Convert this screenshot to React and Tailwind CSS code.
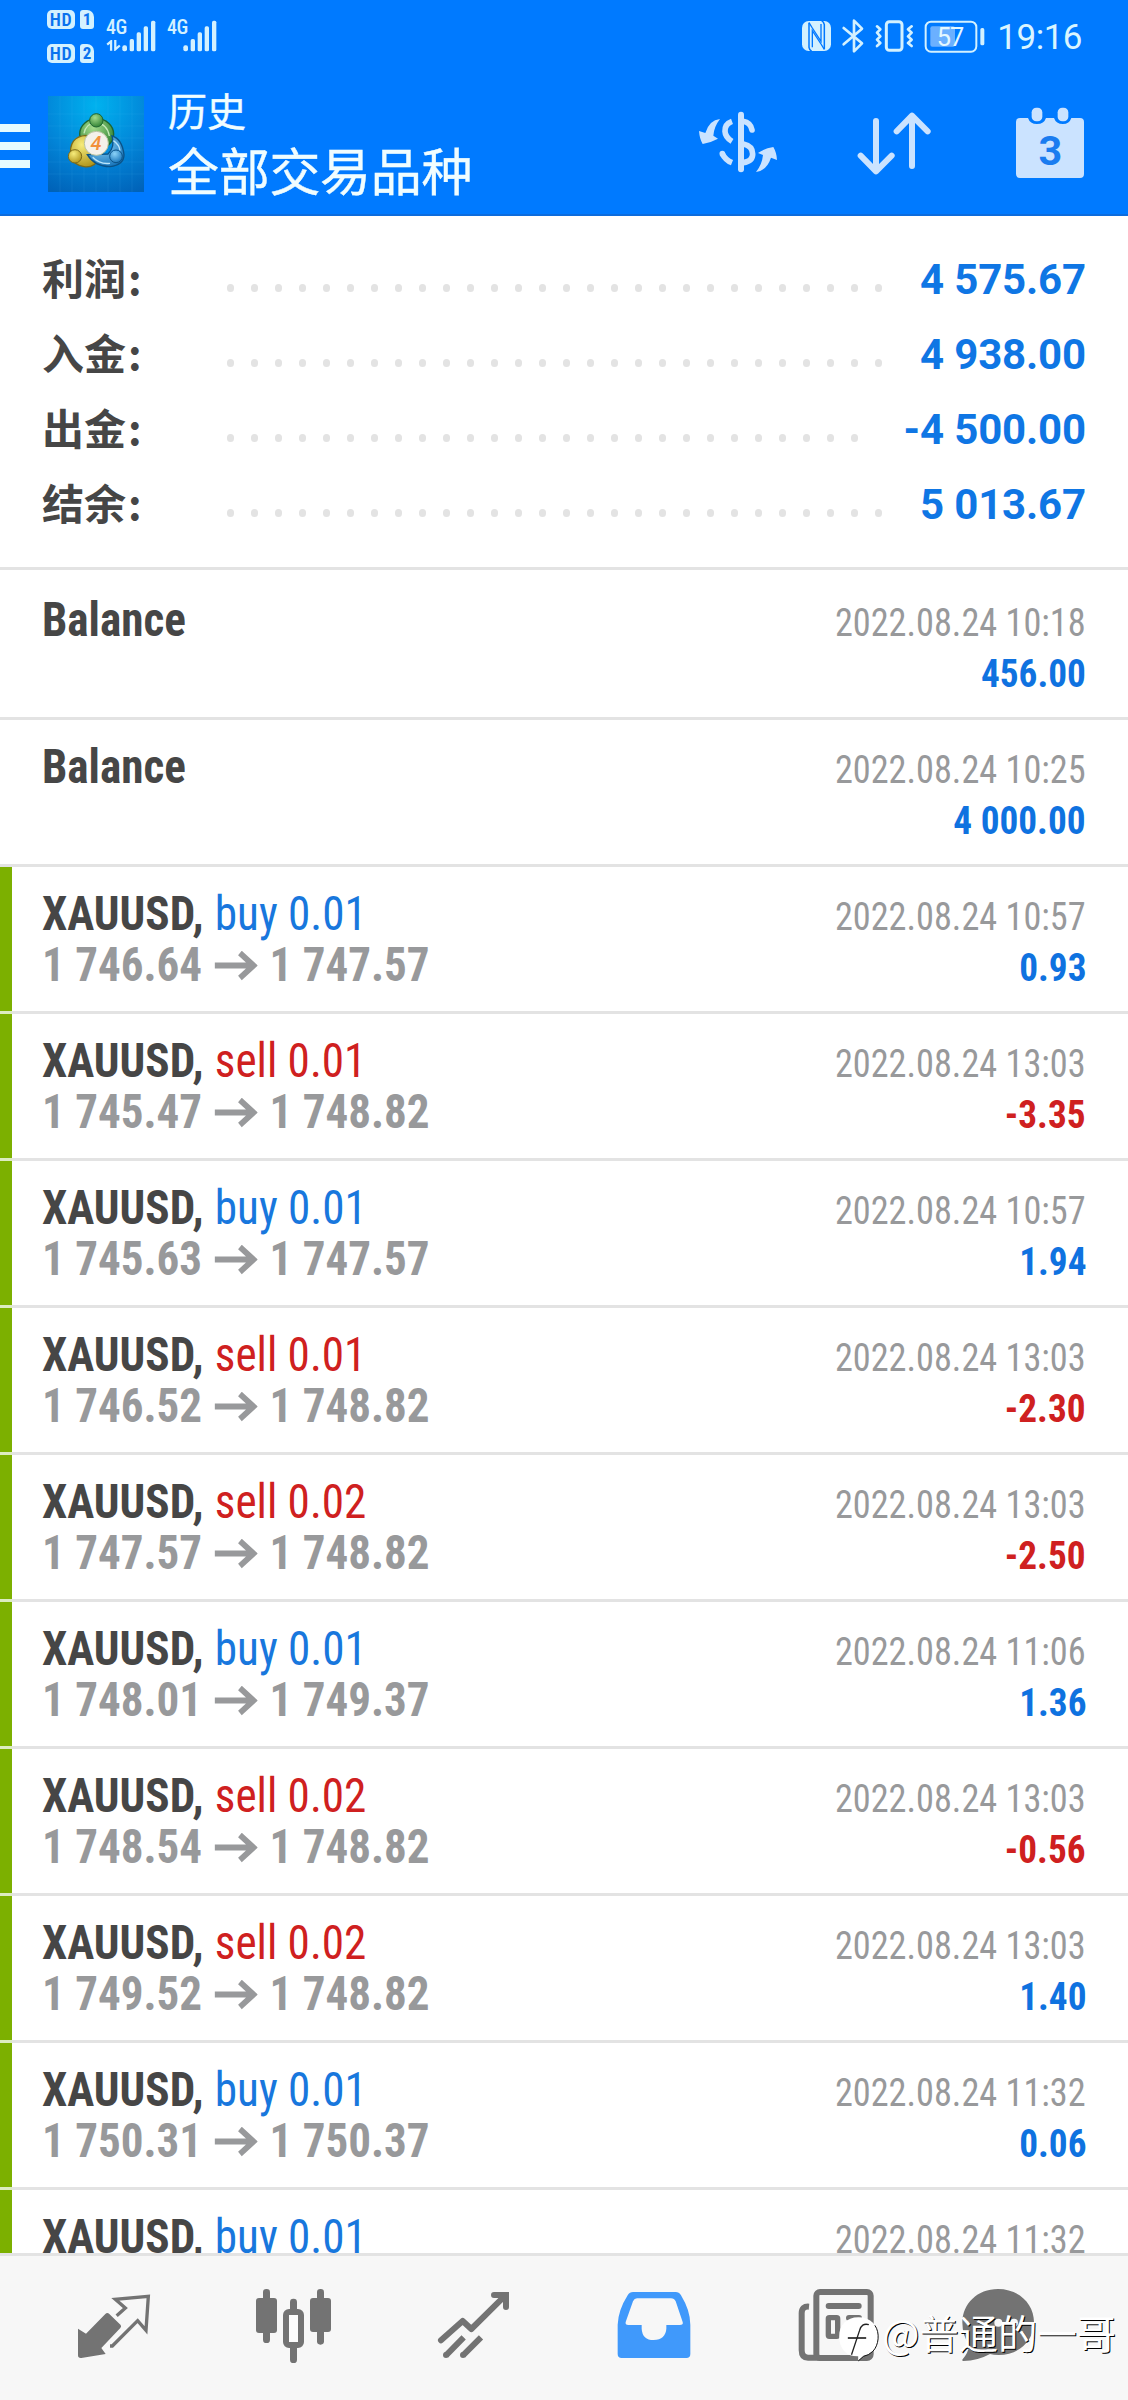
const summary = [
  { label: "利润", value: "4 575.67", dots: 28 },
  { label: "入金", value: "4 938.00", dots: 28 },
  { label: "出金", value: "-4 500.00", dots: 27 },
  { label: "结余", value: "5 013.67", dots: 28 },
];

const deals = [
  { date: "2022.08.24 10:18", profit: "456.00" },
  { date: "2022.08.24 10:25", profit: "4 000.00" },
  { side: "buy", volume: "0.01", from: "1 746.64", to: "1 747.57", date: "2022.08.24 10:57", profit: "0.93" },
  { side: "sell", volume: "0.01", from: "1 745.47", to: "1 748.82", date: "2022.08.24 13:03", profit: "-3.35" },
  { side: "buy", volume: "0.01", from: "1 745.63", to: "1 747.57", date: "2022.08.24 10:57", profit: "1.94" },
  { side: "sell", volume: "0.01", from: "1 746.52", to: "1 748.82", date: "2022.08.24 13:03", profit: "-2.30" },
  { side: "sell", volume: "0.02", from: "1 747.57", to: "1 748.82", date: "2022.08.24 13:03", profit: "-2.50" },
  { side: "buy", volume: "0.01", from: "1 748.01", to: "1 749.37", date: "2022.08.24 11:06", profit: "1.36" },
  { side: "sell", volume: "0.02", from: "1 748.54", to: "1 748.82", date: "2022.08.24 13:03", profit: "-0.56" },
  { side: "sell", volume: "0.02", from: "1 749.52", to: "1 748.82", date: "2022.08.24 13:03", profit: "1.40" },
  { side: "buy", volume: "0.01", from: "1 750.31", to: "1 750.37", date: "2022.08.24 11:32", profit: "0.06" },
  { side: "buy", volume: "0.01", date: "2022.08.24 11:32" },
];

function HdBadge({ n }) {
  return (
    <div className="flex h-[19px] gap-[5px] text-[#0a72ee]">
      <span className="flex w-7 items-center justify-center rounded-[5px] bg-[#d3f1ff] font-['Roboto'] text-[18px] leading-[19px] font-semibold font-stretch-condensed tracking-[0.5px]">HD</span>
      <span className="flex w-[14px] items-center justify-center rounded-[3px] rounded-tr-[7px] bg-[#d3f1ff] font-['Roboto'] text-[17px] leading-[19px] font-bold font-stretch-condensed">{n}</span>
    </div>
  );
}

function Bars() {
  return (
    <svg viewBox="369 60 102 96" className="h-8 w-[34px]" fill="#d3f1ff">
      <rect x="370" y="136" width="14" height="18" rx="6" />
      <rect x="392" y="117" width="13" height="37" rx="5" />
      <rect x="413" y="97" width="13" height="57" rx="5" />
      <rect x="434" y="79" width="13" height="75" rx="5" />
      <rect x="456" y="62" width="13" height="92" rx="5" />
    </svg>
  );
}

function Signal({ data }) {
  return (
    <div className="flex h-8 w-[50px]">
      <div className="flex w-4 flex-col">
        <span className="font-['Roboto'] text-[20px] leading-[15px] font-medium font-stretch-condensed tracking-[-0.5px] text-[#d3f1ff]">4G</span>
        {data && (
          <svg viewBox="320 121 45 34" className="mt-[5px] h-[11px] w-[15px]" fill="none" stroke="#d3f1ff" strokeWidth="7">
            <path d="M323 135 L335 125 V154 M348 121 V150 L362 138" />
          </svg>
        )}
      </div>
      <Bars />
    </div>
  );
}

function StatusBar() {
  return (
    <div className="flex h-[72px] items-start justify-between">
      <div className="flex pt-[10px] pl-[47px]">
        <div className="flex flex-col gap-[15px]">
          <HdBadge n="1" />
          <HdBadge n="2" />
        </div>
        <div className="flex gap-[11px] pt-[10px] pl-[12px]">
          <Signal data />
          <Signal />
        </div>
      </div>
      <div className="flex pt-[18px] pr-[46px]">
        <svg viewBox="420 54 555 108" className="h-9 w-[185px]">
          <rect x="426" y="63" width="87" height="90" rx="20" fill="#d3f1ff" />
          <path d="M447 68 V142 Q448 150 455 154 M493 148 V74 Q492 66 485 62" stroke="#0078ff" strokeWidth="4.5" fill="none" />
          <path d="M457 142 V92 L483 132 M457 84 L483 124 V72" stroke="#0078ff" strokeWidth="4" fill="none" />
          <path d="M447 68 L457 84 M483 132 L493 148" stroke="#0078ff" strokeWidth="4" fill="none" />
          <path d="M551 84 L606 130 L582 154 V62 L606 86 L551 133" stroke="#d3f1ff" strokeWidth="8" fill="none" strokeLinejoin="round" strokeLinecap="round" />
          <rect x="679" y="65" width="47" height="86" rx="9" stroke="#d3f1ff" strokeWidth="9" fill="none" />
          <path d="M651 79 L661 88 L651 98 L661 109 L651 119 L661 129 L651 138 M755 79 L744 88 L755 98 L744 109 L755 119 L744 129 L755 138" stroke="#d3f1ff" strokeWidth="8" fill="none" strokeLinejoin="round" strokeLinecap="round" />
          <rect x="797" y="65" width="152" height="90" rx="16" stroke="#d3f1ff" strokeWidth="6" fill="none" />
          <rect x="811" y="79" width="74" height="61" rx="6" fill="#6bb0ff" />
          <rect x="961" y="84" width="12" height="52" rx="5" fill="#d3f1ff" />
          <text x="870" y="138" textAnchor="middle" fontFamily="Roboto" fontSize="76" letterSpacing="-3" fill="#e4f8ff">57</text>
        </svg>
        <span className="ml-[12px] font-['Roboto'] text-[35px] leading-[40px] tracking-[-0.5px] text-[#d9f5ff]">19:16</span>
      </div>
    </div>
  );
}

function Logo() {
  return (
    <svg viewBox="144 288 288 288" className="h-24 w-24">
      <defs>
        <radialGradient id="sky" cx="0.5" cy="0.1" r="1"><stop offset="0" stopColor="#00b2ef" /><stop offset="0.55" stopColor="#0285d8" /><stop offset="1" stopColor="#0062b8" /></radialGradient>
        <radialGradient id="green" cx="0.4" cy="0.3" r="0.8"><stop offset="0" stopColor="#a4dc8c" /><stop offset="1" stopColor="#23782a" /></radialGradient>
        <radialGradient id="gold" cx="0.4" cy="0.3" r="0.8"><stop offset="0" stopColor="#f6ec7c" /><stop offset="1" stopColor="#a98d12" /></radialGradient>
        <radialGradient id="blue" cx="0.4" cy="0.3" r="0.8"><stop offset="0" stopColor="#8bd2f8" /><stop offset="1" stopColor="#0d6cb4" /></radialGradient>
      </defs>
      <rect x="144" y="288" width="288" height="288" fill="url(#sky)" />
      <path d="M180 288 V576 M216 288 V576 M252 288 V576 M288 288 V576 M324 288 V576 M360 288 V576 M396 288 V576 M144 342 H432 M144 378 H432 M144 414 H432 M144 450 H432 M144 486 H432 M144 522 H432" stroke="#5fc6f2" strokeOpacity="0.16" strokeWidth="2" />
      <ellipse cx="290" cy="402" rx="51" ry="46" fill="url(#green)" stroke="#1d6530" strokeWidth="4" />
      <path d="M252 400 Q258 370 288 368 Q322 372 328 408" fill="none" stroke="#c5e8b8" strokeWidth="4" />
      <path d="M212 468 Q206 410 258 406 L296 478 Q284 504 252 500 Q222 496 212 468 Z" fill="url(#gold)" stroke="#7c6a18" strokeWidth="4" />
      <path d="M262 464 Q284 500 330 500 Q372 494 372 464 Q366 416 336 408 Q346 440 324 462 Z" fill="url(#blue)" stroke="#0b5388" strokeWidth="4" />
      <path d="M278 472 Q300 494 330 490 M340 422 Q358 434 360 452" fill="none" stroke="#b9e5fb" strokeWidth="4" />
      <circle cx="289" cy="361" r="20" fill="url(#green)" stroke="#1d6530" strokeWidth="3" />
      <circle cx="225" cy="469" r="20" fill="url(#gold)" stroke="#7c6a18" strokeWidth="3" />
      <circle cx="348" cy="469" r="19" fill="url(#blue)" stroke="#0b5388" strokeWidth="3" />
      <circle cx="289" cy="430" r="36" fill="#f4f1ea" stroke="#b9c3a0" strokeWidth="3" />
      <text x="288" y="451" textAnchor="middle" fontFamily="Roboto" fontStyle="italic" fontWeight="500" fontSize="60" fill="#f2903c">4</text>
    </svg>
  );
}

function Toolbar() {
  return (
    <div className="flex h-[144px] items-start border-b-2 border-[#0d6cdc]">
      <div className="mt-[52px] flex w-[30px] flex-col gap-[10px]">
        <span className="h-2 bg-[#e6fbff]" />
        <span className="h-2 bg-[#e6fbff]" />
        <span className="h-2 bg-[#e6fbff]" />
      </div>
      <div className="mt-6 ml-[18px]"><Logo /></div>
      <div className="mt-[10px] ml-[24px] flex flex-1 flex-col font-['Noto_Sans_CJK_SC'] text-[#f0fdff] [-webkit-text-stroke:0.4px_#f0fdff]">
        <span className="text-[39px] leading-[54px]">历史</span>
        <span className="text-[51px] leading-[67px] tracking-[-0.3px]">全部交易品种</span>
      </div>
      <div className="mt-[34px] mr-[41px] flex h-[74px] text-[#cbe3ff]">
        <svg viewBox="108 318 252 222" className="h-[74px] w-[84px]" fill="none" stroke="currentColor">
          <path d="M243 344 V508" strokeWidth="18" strokeLinecap="round" />
          <path d="M216 364 Q194 372 195 394 Q196 412 216 424" strokeWidth="17" />
          <path d="M249 364 Q272 368 276 390" strokeWidth="17" strokeLinecap="round" />
          <path d="M187 461 Q196 480 216 488" strokeWidth="17" />
          <circle cx="187" cy="461" r="8.5" fill="currentColor" stroke="none" />
          <path d="M250 432 Q278 438 278 462 Q278 484 250 488" strokeWidth="17" />
          <path d="M180 357 Q148 360 136 399 L117 393 Q119 418 128 432 Q152 428 174 416 L160 407 Q162 380 180 357 Z" fill="currentColor" stroke="none" />
          <path d="M288 516 Q320 512 333 473 L351 480 Q350 458 340 441 Q316 444 294 459 L309 465 Q306 494 288 516 Z" fill="currentColor" stroke="none" />
        </svg>
        <svg viewBox="585 318 234 222" className="ml-[75px] h-[74px] w-[78px]" fill="none" stroke="currentColor" strokeWidth="18" strokeLinecap="round" strokeLinejoin="round">
          <path d="M648 363 V514 M602 467 L648 514 L695 467" />
          <path d="M756 498 V347 M710 394 L756 347 L803 394" />
        </svg>
        <svg viewBox="1059 318 222 222" className="ml-[80px] h-[74px] w-[74px]" fill="currentColor">
          <path d="M1080 354 H1104 Q1110 372 1131 372 Q1152 372 1158 354 H1182 Q1188 372 1209 372 Q1228 372 1234 354 H1260 Q1272 354 1272 366 V522 Q1272 534 1260 534 H1080 Q1068 534 1068 522 V366 Q1068 354 1080 354 Z" />
          <rect x="1115" y="323" width="32" height="41" rx="14" />
          <rect x="1193" y="323" width="32" height="41" rx="14" />
          <text x="1171" y="495" textAnchor="middle" fontFamily="Roboto" fontWeight="700" fontSize="124" fill="#1a7cf0">3</text>
        </svg>
      </div>
    </div>
  );
}

function Summary() {
  return (
    <section className="flex h-[354px] flex-col border-b-[3px] border-[#e3e3e3] pt-[26px]">
      {summary.map((s) => (
        <div key={s.label} className="flex h-[75px] items-center justify-between pr-[42px] pl-[42px]">
          <div className="flex items-center">
            <span className="mb-[5px] w-[185px] font-['Noto_Sans_CJK_SC'] text-[42px] leading-[70px] font-bold text-[#464646]">
              {s.label}<span className="ml-[2px]">:</span>
            </span>
            <div className="mt-4 flex gap-[17px]">
              {Array.from({ length: s.dots }, (_, i) => (
                <span key={i} className="h-2 w-[7px] rounded-full bg-[#e3e3e3]" />
              ))}
            </div>
          </div>
          <span className="font-['Roboto'] text-[42px] leading-[75px] font-bold tracking-[-0.15px] text-[#0f76e4]">{s.value}</span>
        </div>
      ))}
    </section>
  );
}

function DealRow({ side, volume, from, to, date, profit }) {
  const tone = side === "sell" ? "text-[#cf2020]" : "text-[#1877dd]";
  const profitTone = profit?.startsWith("-") ? "text-[#cf2020]" : "text-[#0f72e0]";
  return (
    <div className="flex h-[147px] shrink-0 font-['Roboto'] font-stretch-condensed">
      <div className={side ? "w-3 border-b-[3px] border-[#dcecc0] bg-[#7cb000] bg-clip-padding" : "w-3 border-b-[3px] border-[#e3e3e3]"} />
      <div className="flex flex-1 flex-col border-b-[3px] border-[#e3e3e3] pt-[21px] pr-[42px] pl-[30px] leading-[51px]">
        <div className="flex h-[51px] items-baseline justify-between">
          <div className="flex origin-left scale-x-[0.94] items-baseline text-[48px]">
            <span className="font-bold text-[#464646]">{side ? "XAUUSD," : "Balance"}</span>
            {side && <span className={`ml-[12px] ${tone}`}>{side} {volume}</span>}
          </div>
          <span className="origin-right scale-x-[0.93] text-[39px] text-[#98999b]">{date}</span>
        </div>
        {profit && (
          <div className="flex h-[51px] items-baseline justify-between">
            <div className="flex origin-left scale-x-[0.938] items-baseline text-[48px] font-bold text-[#98999b]">
              {from ? (
                <>
                  <span>{from}</span>
                  <svg viewBox="0 0 46 30" className="mx-[13px] h-[30px] w-[46px]" fill="none" stroke="currentColor" strokeWidth="6">
                    <path d="M0 14.5 H41 M27 2 L41.5 14.5 L27 27" />
                  </svg>
                  <span>{to}</span>
                </>
              ) : (
                <span>&nbsp;</span>
              )}
            </div>
            <span className={`origin-right scale-x-[0.955] text-[39px] font-bold ${profitTone}`}>{profit}</span>
          </div>
        )}
      </div>
    </div>
  );
}

const navIcon = "h-20 w-[90px] overflow-visible";

function BottomNav() {
  return (
    <nav className="flex h-[147px] shrink-0 items-start border-t-[3px] border-[#e3e3e3] bg-[#f7f7f7] pt-[30px] pl-6 text-[#737373]">
      <div className="flex w-[180px] justify-center">
        <svg viewBox="27 48 270 240" className={navIcon}>
          <path d="M54 176 L78 191 L136 132 Q142 126 148 132 L182 165 Q185 169 181 174 L124 234 L137 252 L64 264 Q54 265 54 256 Z" fill="currentColor" />
          <path d="M170 137 L196 114 L166 88 L265 79 L258 181 L233 152 L157 228 H150" fill="none" stroke="currentColor" strokeWidth="10" />
        </svg>
      </div>
      <div className="flex w-[180px] justify-center">
        <svg viewBox="567 48 270 240" className={navIcon} fill="currentColor">
          <rect x="588" y="84" width="63" height="105" rx="9" />
          <rect x="609" y="57" width="21" height="162" rx="10" />
          <rect x="750" y="84" width="63" height="102" rx="9" />
          <rect x="771" y="57" width="21" height="167" rx="10" />
          <rect x="690" y="86" width="21" height="48" rx="10" />
          <rect x="690" y="220" width="21" height="59" rx="10" />
          <rect x="678" y="126" width="45" height="99" rx="9" fill="#fcfcfc" stroke="currentColor" strokeWidth="18" />
        </svg>
      </div>
      <div className="flex w-[180px] justify-center">
        <svg viewBox="1107 48 270 240" className={navIcon} fill="none" stroke="currentColor" strokeWidth="18">
          <path d="M1143 211 L1208 153 L1234 177 L1336 76" strokeLinecap="round" strokeLinejoin="round" />
          <path d="M1302 75 H1338 V111" strokeLinecap="round" />
          <path d="M1211 202 L1158 256 M1263 202 L1209 256" />
          <circle cx="1158" cy="255" r="9" fill="currentColor" stroke="none" />
          <circle cx="1209" cy="255" r="9" fill="currentColor" stroke="none" />
        </svg>
      </div>
      <div className="flex w-[180px] justify-center">
        <svg viewBox="28 48 270 240" className={navIcon}>
          <path d="M100 66 H228 Q238 66 244 76 Q272 122 272 164 V252 Q272 264 260 264 H66 Q54 264 54 252 V164 Q56 120 84 76 Q90 66 100 66 Z M112 85 Q104 85 100 94 L78 156 Q76 165 86 165 H126 V176 Q128 210 162 210 Q198 208 200 176 V165 H240 Q252 165 249 156 L228 94 Q224 85 214 85 Z" fill="#4099fb" fillRule="evenodd" />
        </svg>
      </div>
      <div className="flex w-[180px] justify-center">
        <svg viewBox="567 48 270 240" className={navIcon} fill="currentColor">
          <path d="M627 110 Q605 108 605 130 V240 Q605 263 624 263 H800" fill="none" stroke="currentColor" strokeWidth="18" />
          <rect x="649" y="66" width="163" height="198" rx="11" fill="#f7f7f7" stroke="currentColor" strokeWidth="18" />
          <rect x="677" y="99" width="108" height="18" rx="9" />
          <rect x="685" y="143" width="28" height="56" rx="3" fill="#f7f7f7" stroke="currentColor" strokeWidth="16" />
          <rect x="738" y="135" width="48" height="18" rx="9" />
          <rect x="738" y="186" width="48" height="18" rx="9" />
        </svg>
      </div>
      <div className="flex w-[180px] justify-center">
        <svg viewBox="567 48 270 240" className={navIcon} fill="currentColor">
          <path d="M654 57 C716 57 762 101 762 157 C762 213 716 255 656 255 Q640 255 630 252 Q594 272 550 273 Q544 272 549 266 Q564 250 568 226 Q547 196 547 157 C548 101 592 57 654 57 Z" />
          <circle cx="655" cy="158" r="12" fill="#f7f7f7" />
          <circle cx="702" cy="158" r="12" fill="#f7f7f7" />
        </svg>
      </div>
    </nav>
  );
}

function Watermark() {
  return (
    <div className="absolute right-[12px] bottom-[36px] flex items-end text-white">
      <svg viewBox="170 140 122 138" className="mb-[2px] h-[46px] w-[41px]">
        <path d="M231 144 C268 144 290 168 290 202 C290 234 272 254 246 260 L230 275 V261 C194 262 173 236 173 202 C173 168 194 144 231 144 Z" fill="#fff" />
        <path d="M280 168 C296 190 292 228 274 246 Q262 258 246 261 L230 275" fill="none" stroke="#111" strokeWidth="3" />
        <path d="M262 166 Q240 160 234 184 L210 256" fill="none" stroke="#222" strokeWidth="4" />
        <path d="M199 206 H254" fill="none" stroke="#222" strokeWidth="5" />
      </svg>
      <span className="mb-[5px] ml-[3px] font-['Noto_Sans_CJK_SC'] text-[39.3px] leading-[54px] [text-shadow:1px_1px_0.5px_#000]">@普通的一哥</span>
    </div>
  );
}

export default function App() {
  return (
    <div className="relative flex h-[2400px] w-[1128px] flex-col overflow-hidden bg-white">
      <header className="flex h-[216px] shrink-0 flex-col bg-[#007aff]">
        <StatusBar />
        <Toolbar />
      </header>
      <Summary />
      <main className="flex min-h-0 flex-1 flex-col overflow-hidden pt-[3px]">
        {deals.map((d, i) => (
          <DealRow key={i} {...d} />
        ))}
      </main>
      <BottomNav />
      <Watermark />
    </div>
  );
}
